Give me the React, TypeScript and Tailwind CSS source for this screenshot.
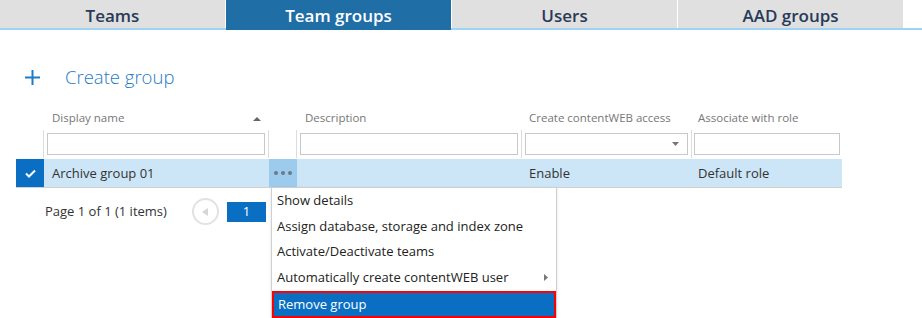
import React from "react";

const tabs = ["Teams", "Team groups", "Users", "AAD groups"];

const menuItems = [
  "Show details",
  "Assign database, storage and index zone",
  "Activate/Deactivate teams",
  "Automatically create contentWEB user",
];

export default function App() {
  return (
    <div
      className="relative w-[922px] h-[318px] overflow-hidden bg-white text-[#222]"
      style={{ fontFamily: '"Open Sans", "Noto Sans", sans-serif' }}
    >
      {/* tabs */}
      <div className="flex h-[30px] border-b-2 border-[#9fd3f6] gap-px">
        {tabs.map((t) =>
          t === "Team groups" ? (
            <div
              key={t}
              className="w-[225px] h-[30px] bg-[#1f6ea6] text-white text-[17px] font-semibold flex items-center justify-center pt-[2px] z-10"
            >
              {t}
            </div>
          ) : (
            <div
              key={t}
              className="w-[225px] h-[28px] bg-[#e0e0e0] text-[#273a58] text-[17px] font-semibold flex items-center justify-center pt-[3px]"
            >
              {t}
            </div>
          )
        )}
      </div>

      {/* create group */}
      <div className="flex items-center mt-[34px] ml-[24px] h-[26px] text-[#1e7bc6]">
        <svg width="17" height="17" viewBox="0 0 17 17">
          <path d="M8.5 1v15M1 8.5h15" stroke="#1e7bc6" strokeWidth="2" />
        </svg>
        <span className="ml-[24px] text-[18.5px] font-light">Create group</span>
      </div>

      {/* grid */}
      <div className="ml-[16px] mt-[16px] w-[826px]">
        {/* header */}
        <div className="grid grid-cols-[28px_225px_28px_225px_170px_150px] h-[24px] text-[11.5px] text-[#777]">
          <div />
          <div className="flex items-center justify-between pl-[8px] pr-[8px]">
            <span>Display name</span>
            <svg width="8" height="5" viewBox="0 0 8 5">
              <path d="M0 5L4 1L8 5Z" fill="#666" />
            </svg>
          </div>
          <div />
          <div className="flex items-center pl-[8px]">Description</div>
          <div className="flex items-center pl-[7px]">Create contentWEB access</div>
          <div className="flex items-center pl-[6px]">Associate with role</div>
        </div>

        {/* filter row */}
        <div className="grid grid-cols-[28px_225px_28px_225px_170px_150px] h-[28px]">
          <div className="border-r border-[#dcdcdc]" />
          <div className="border-r border-[#dcdcdc] px-[3px] py-[3px]">
            <div className="h-[22px] border border-[#c8c8c8] bg-white" />
          </div>
          <div className="border-r border-[#dcdcdc]" />
          <div className="border-r border-[#dcdcdc] px-[3px] py-[3px]">
            <div className="h-[22px] border border-[#c8c8c8] bg-white" />
          </div>
          <div className="border-r border-[#dcdcdc] px-[3px] py-[3px]">
            <div className="h-[22px] border border-[#c8c8c8] bg-white flex items-center justify-end pr-[8px]">
              <svg width="7" height="4" viewBox="0 0 7 4">
                <path d="M0 0H7L3.5 4Z" fill="#777" />
              </svg>
            </div>
          </div>
          <div className="px-[2px] py-[3px]">
            <div className="h-[22px] border border-[#c8c8c8] bg-white" />
          </div>
        </div>

        {/* data row */}
        <div className="grid grid-cols-[28px_225px_28px_225px_170px_150px] h-[29px] mt-px border-b border-[#d0d0d0] bg-[#cde6f7] text-[13px] text-[#333]">
          <div className="bg-[#0a6fc2] flex items-center justify-center">
            <svg width="11" height="9" viewBox="0 0 11 9">
              <path d="M1 4.5L4 7.5L10 1.5" stroke="white" strokeWidth="2" fill="none" />
            </svg>
          </div>
          <div className="flex items-center pl-[8px] pt-[2px]">Archive group 01</div>
          <div className="bg-[#9ccbee] flex items-center justify-center gap-[3px]">
            <span className="w-[4px] h-[4px] rounded-full bg-[#6c7a86]" />
            <span className="w-[4px] h-[4px] rounded-full bg-[#6c7a86]" />
            <span className="w-[4px] h-[4px] rounded-full bg-[#6c7a86]" />
          </div>
          <div />
          <div className="flex items-center pl-[7px] pt-[2px]">Enable</div>
          <div className="flex items-center pl-[6px] pt-[2px]">Default role</div>
        </div>

        {/* pager */}
        <div className="flex items-center h-[47px] pl-[29px] text-[13px] text-[#333]">
          <span>Page 1 of 1 (1 items)</span>
          <div className="ml-[25px] w-[27px] h-[27px] rounded-full border-2 border-[#e2e2e2] flex items-center justify-center">
            <svg width="6" height="8" viewBox="0 0 6 8">
              <path d="M6 0V8L0 4Z" fill="#d6d6d6" />
            </svg>
          </div>
          <div className="ml-[8px] w-[39px] h-[20px] bg-[#0a6fc2] text-white flex items-center justify-center">
            1
          </div>
        </div>
      </div>

      {/* context menu */}
      <div className="absolute left-[271px] top-[187px] w-[286px] h-[132px] bg-white border border-[#cfcfcf] text-[13px] text-[#222] shadow-sm">
        {menuItems.map((m, i) => (
          <div key={m} className="h-[25.5px] flex items-center justify-between pl-[5px] pr-[8px]">
            <span>{m}</span>
            {i === 3 && (
              <svg width="4" height="7" viewBox="0 0 4 7">
                <path d="M0 0L4 3.5L0 7Z" fill="#777" />
              </svg>
            )}
          </div>
        ))}
        <div className="mt-[1px] h-[27px] border-2 border-[#ff0000] bg-[#0a6fc2] text-white flex items-center pl-[4px]">
          Remove group
        </div>
      </div>
    </div>
  );
}
